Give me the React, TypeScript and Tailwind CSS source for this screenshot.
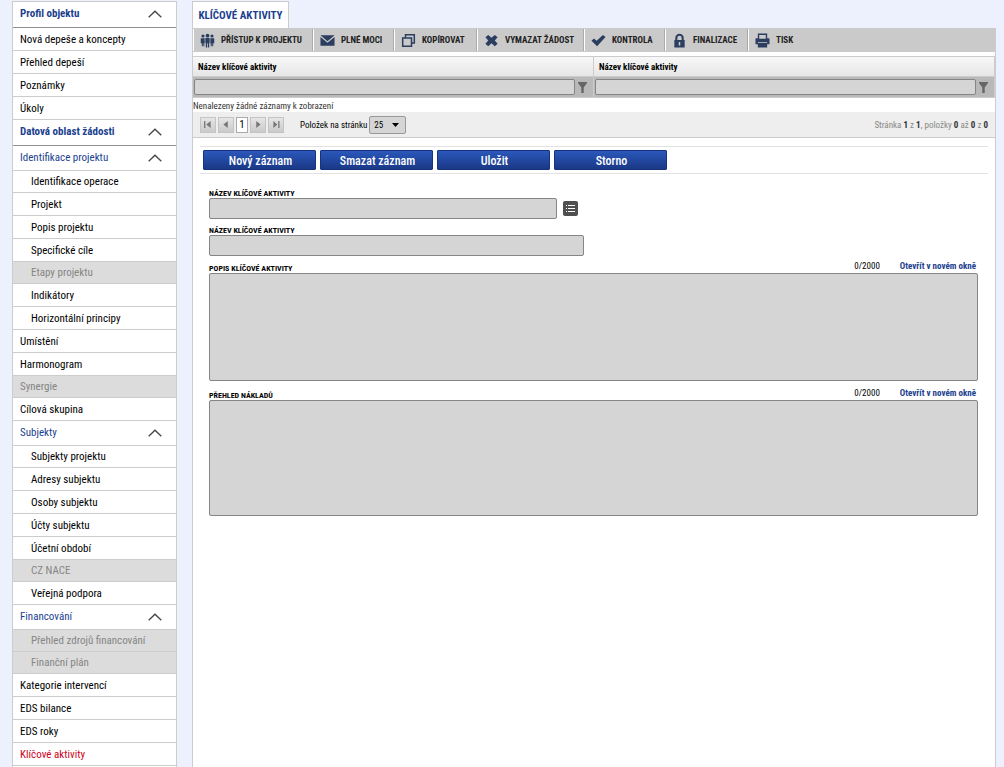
import { clsx } from "clsx";
import type { ReactNode } from "react";

interface MenuItem {
  label: string;
  kind?: "section" | "group" | "sub" | "first" | "subDisabled" | "disabled" | "active";
}

const MENU: MenuItem[] = [
  { label: "Profil objektu", kind: "section" },
  { label: "Nová depeše a koncepty" },
  { label: "Přehled depeší" },
  { label: "Poznámky" },
  { label: "Úkoly" },
  { label: "Datová oblast žádosti", kind: "section" },
  { label: "Identifikace projektu", kind: "group" },
  { label: "Identifikace operace", kind: "first" },
  { label: "Projekt", kind: "sub" },
  { label: "Popis projektu", kind: "sub" },
  { label: "Specifické cíle", kind: "sub" },
  { label: "Etapy projektu", kind: "subDisabled" },
  { label: "Indikátory", kind: "sub" },
  { label: "Horizontální principy", kind: "sub" },
  { label: "Umístění" },
  { label: "Harmonogram" },
  { label: "Synergie", kind: "disabled" },
  { label: "Cílová skupina" },
  { label: "Subjekty", kind: "group" },
  { label: "Subjekty projektu", kind: "first" },
  { label: "Adresy subjektu", kind: "sub" },
  { label: "Osoby subjektu", kind: "sub" },
  { label: "Účty subjektu", kind: "sub" },
  { label: "Účetní období", kind: "sub" },
  { label: "CZ NACE", kind: "subDisabled" },
  { label: "Veřejná podpora", kind: "sub" },
  { label: "Financování", kind: "group" },
  { label: "Přehled zdrojů financování", kind: "subDisabled" },
  { label: "Finanční plán", kind: "subDisabled" },
  { label: "Kategorie intervencí" },
  { label: "EDS bilance" },
  { label: "EDS roky" },
  { label: "Klíčové aktivity", kind: "active" },
];

function Chevron() {
  return (
    <svg width="14" height="8" viewBox="0 0 14 8" fill="none" stroke="#444" strokeWidth="1.3">
      <path d="M0.7 7.3 7 1.2 13.3 7.3" />
    </svg>
  );
}

function MenuRow({ label, kind }: MenuItem) {
  if (kind === "section" || kind === "group") {
    return (
      <li>
        <button
          className={clsx(
            "flex w-full items-center justify-between border-b pl-[7px] pr-[14px] text-left text-[#1c3f8f]",
            kind === "section" ? "h-[26px] border-[#909090] pb-px font-bold" : "h-[25px] border-[#ccc]",
          )}
        >
          {label}
          <Chevron />
        </button>
      </li>
    );
  }
  const sub = kind === "sub" || kind === "first" || kind === "subDisabled";
  const disabled = kind === "disabled" || kind === "subDisabled";
  const short = disabled || kind === "first";
  return (
    <li>
      <a
        href="#"
        className={clsx(
          "flex items-center border-b border-[#ccc] pt-px",
          sub ? "pl-[18px]" : "pl-[7px]",
          short ? "h-[22px]" : "h-[23px]",
          disabled && "bg-[#dcdcdc] text-[#858585]",
          kind === "active" && "text-[#cc0022]",
        )}
      >
        {label}
      </a>
    </li>
  );
}

/* Toolbar icons, all on a 16px grid */
const ICONS: Record<string, ReactNode> = {
  people: (
    <>
      <circle cx="8" cy="2.8" r="2" />
      <circle cx="3.2" cy="3.2" r="1.7" />
      <circle cx="12.8" cy="3.2" r="1.7" />
      <path d="M5.7 5.4h4.6v5.2H9.8V15.5H8.4V11h-.8v4.5H6.2v-4.9h-.5zM.8 5.5h4.2v5.7h-.4V14H3.5v-3H3v3H1.9v-3.2H.8zM11 5.5h4.2v5.3h-1.1V14H13v-3h-.5v3h-1.1v-2.8H11z" />
    </>
  ),
  mail: <path d="M.5 2.5h15L8 8.7zM.5 4.2 8 10.3l7.500-6.1V13.5H.5z" />,
  copy: <path fillRule="evenodd" d="M4 1h11v10.5h-3V15H1V4.5h3zM5.6 2.6v1.9H12v5.4h1.4V2.6zM2.6 6.1v7.3h7.8V6.1z" />,
  cross: <path d="M1.5 4.5 4.5 2 8 5l3.5-3 3 2.5L11.5 8l3 3.5-3 2.5L8 11l-3.5 3-3-2.5L4.5 8z" />,
  check: <path d="M.5 8.3 3.2 5.8 6 8.3 12.7 2l2.8 2.2L6.5 14z" />,
  lock: <path fillRule="evenodd" d="M2.5 7.500h1V5.3a4.5 4.5 0 0 1 9 0v2.2h1v8h-11zM5.7 7.5h4.6V5.3a2.3 2.3 0 0 0-4.6 0zM7.2 9.7v3.6h1.6V9.7z" />,
  print: <path fillRule="evenodd" d="M3 .5h10v5h1.8l.7.7V12H13v3.5H3V12H.5V6.2l.7-.7H3zM4.500 2v4h7V2zM3 9.500v1h10v-1z" />,
};

const TOOLBAR = [
  { label: "PŘÍSTUP K PROJEKTU", icon: "people", width: "w-[120px]" },
  { label: "PLNÉ MOCI", icon: "mail", width: "w-[81px]" },
  { label: "KOPÍROVAT", icon: "copy", width: "w-[83px]" },
  { label: "VYMAZAT ŽÁDOST", icon: "cross", width: "w-[107px]" },
  { label: "KONTROLA", icon: "check", width: "w-[81px]" },
  { label: "FINALIZACE", icon: "lock", width: "w-[83px]" },
  { label: "TISK", icon: "print", width: "w-[83px]" },
];

const FIELD = "rounded-[2px] border border-[#858585] bg-[#d5d5d5]";

function FilterColumn({ id }: { id: string }) {
  return (
    <th className="p-0 text-left font-bold">
      <label htmlFor={id} className="flex h-[19px] items-center border-r border-[#ccc] bg-linear-to-b from-[#f8f8f8] to-[#e6e6e6] pl-[5px]">
        Název klíčové aktivity
      </label>
      <div className="flex h-[22px] items-center gap-[3px] border-y border-r border-[#ccc] bg-[#b9b9b9] pl-px pr-[6px]">
        <input id={id} className={clsx(FIELD, "h-4 min-w-0 flex-1")} />
        <button aria-label="Filtr">
          <svg width="9" height="11" viewBox="0 0 9 11" fill="#666" className="block">
            <path d="M0 0h9v1L5.7 5.5V11H3.3V5.5L0 1z" />
          </svg>
        </button>
      </div>
    </th>
  );
}

function PageButton({ label, path }: { label: string; path: string }) {
  return (
    <button aria-label={label} className="flex size-4 items-center justify-center border border-[#c4c4c4] bg-linear-to-b from-[#e6e6e6] to-[#cacaca]">
      <svg width="8" height="7" viewBox="0 0 9 8" fill="#777">
        <path d={path} />
      </svg>
    </button>
  );
}

function TextBlock({ id, label, height }: { id: string; label: string; height: string }) {
  return (
    <div>
      <div className="flex h-3 items-end justify-between">
        <label htmlFor={id} className="text-[8px] leading-[8px] font-bold">{label}</label>
        <div className="mb-px flex gap-5 pr-[2px] text-[9px] leading-[12px]">
          <span>0/2000</span>
          <a href="#" className="font-bold text-[#1c3f8f]">Otevřít v novém okně</a>
        </div>
      </div>
      <textarea id={id} className={clsx(FIELD, "block w-full resize-none", height)} />
    </div>
  );
}

export default function App() {
  return (
    <div className="flex min-h-screen gap-[15px] bg-[#edf0fd] pl-3 pr-2 pt-px font-['Roboto_Condensed','Liberation_Sans_Narrow',sans-serif] text-[11px] leading-[14px] text-black">
      <nav className="w-[165px] shrink-0 border-x border-t border-[#ccc] bg-white">
        <ul>
          {MENU.map(item => <MenuRow key={item.label} {...item} />)}
        </ul>
      </nav>

      <main className="flex min-w-0 flex-1 flex-col">
        <h1 className="flex h-[27px] w-[97px] items-center justify-center border-x border-t border-[#ccc] bg-white pt-px font-bold text-[#1c3f8f]">
          KLÍČOVÉ AKTIVITY
        </h1>

        <div className="flex-1 border-x border-[#ccc] bg-white">
          <div className="flex h-6 bg-[#cacaca] py-px">
            {TOOLBAR.map(t => (
              <button
                key={t.label}
                className={clsx("flex items-center gap-[6px] border-r border-l border-r-[#aaa] border-l-white pl-[6px] text-[9px] font-bold whitespace-nowrap text-[#222] last:border-r-0", t.width)}
              >
                <svg width="15" height="15" viewBox="0 0 16 16" fill="#2c3e5f" className="shrink-0">
                  {ICONS[t.icon]}
                </svg>
                {t.label}
              </button>
            ))}
          </div>

          <table className="mt-1 w-full table-fixed border-collapse border-t border-[#ccc] text-[9px]">
            <thead>
              <tr>
                <FilterColumn id="filter-a" />
                <FilterColumn id="filter-b" />
              </tr>
            </thead>
          </table>
          <p className="h-[14px] pt-px text-[9px] text-[#333]">Nenalezeny žádné záznamy k zobrazení</p>

          <div className="flex h-[26px] items-center border-b border-[#ccc] bg-[#eee] px-[7px] text-[9px]">
            <div className="flex items-center gap-[2px]">
              <PageButton label="První" path="M0 0h1.5v8H0zM7.5 0v8L2.5 4z" />
              <PageButton label="Předchozí" path="M6.5 0v8L1.5 4z" />
              <span className="flex h-4 w-3 items-center justify-center border border-[#aaa] bg-white text-[11px]">1</span>
              <PageButton label="Další" path="M2.5 0v8L7.5 4z" />
              <PageButton label="Poslední" path="M7 0h1.5v8H7zM1.5 0v8L6 4z" />
            </div>
            <label htmlFor="size" className="ml-4">Položek na stránku</label>
            <div className="relative ml-[2px]">
              <select id="size" className="block h-[18px] w-[37px] appearance-none rounded-[2px] border border-[#999] bg-[#d5d5d5] pl-1">
                <option>25</option>
              </select>
              <svg width="7" height="4" viewBox="0 0 7 4" className="pointer-events-none absolute top-[7px] right-[7px]">
                <path d="M0 0h7L3.5 4z" />
              </svg>
            </div>
            <p className="ml-auto text-[#888]">
              Stránka <b className="text-[#333]">1</b> z <b className="text-[#333]">1</b>, položky <b className="text-[#333]">0</b> až <b className="text-[#333]">0</b> z <b className="text-[#333]">0</b>
            </p>
          </div>

          <div className="mx-[7px] mt-2 flex h-7 items-center gap-1 border-y border-[#e2e2e2] pl-[3px]">
            {["Nový záznam", "Smazat záznam", "Uložit", "Storno"].map(label => (
              <button
                key={label}
                className="h-5 w-[113px] rounded-[1px] border border-[#16337c] bg-linear-to-b from-[#2b58bb] to-[#1a3886] pl-[2px] pt-px text-[12px] leading-[16px] font-medium text-white"
              >
                {label}
              </button>
            ))}
          </div>

          <form className="flex flex-col pr-[17px] pl-4">
            <label htmlFor="nazev-1" className="mt-4 text-[8px] leading-[8px] font-bold">NÁZEV KLÍČOVÉ AKTIVITY</label>
            <div className="flex items-center gap-[6px]">
              <input id="nazev-1" className={clsx(FIELD, "h-[21px] w-[348px]")} />
              <button type="button" aria-label="Vybrat ze seznamu" className="flex size-[15px] items-center justify-center rounded-[2px] bg-[#4f4f4f]">
                <svg width="9" height="9" viewBox="0 0 9 9" fill="#fff">
                  <path d="M0 1h1v1H0zM2 1h7v1H2zM0 4h1v1H0zM2 4h7v1H2zM0 7h1v1H0zM2 7h7v1H2z" />
                </svg>
              </button>
            </div>
            <label htmlFor="nazev-2" className="mt-2 text-[8px] leading-[8px] font-bold">NÁZEV KLÍČOVÉ AKTIVITY</label>
            <input id="nazev-2" className={clsx(FIELD, "mb-[5px] h-[21px] w-[375px]")} />
            <div className="flex flex-col gap-[7px]">
              <TextBlock id="popis" label="POPIS KLÍČOVÉ AKTIVITY" height="h-[108px]" />
              <TextBlock id="naklady" label="PŘEHLED NÁKLADŮ" height="h-[116px]" />
            </div>
          </form>
        </div>
      </main>
    </div>
  );
}
